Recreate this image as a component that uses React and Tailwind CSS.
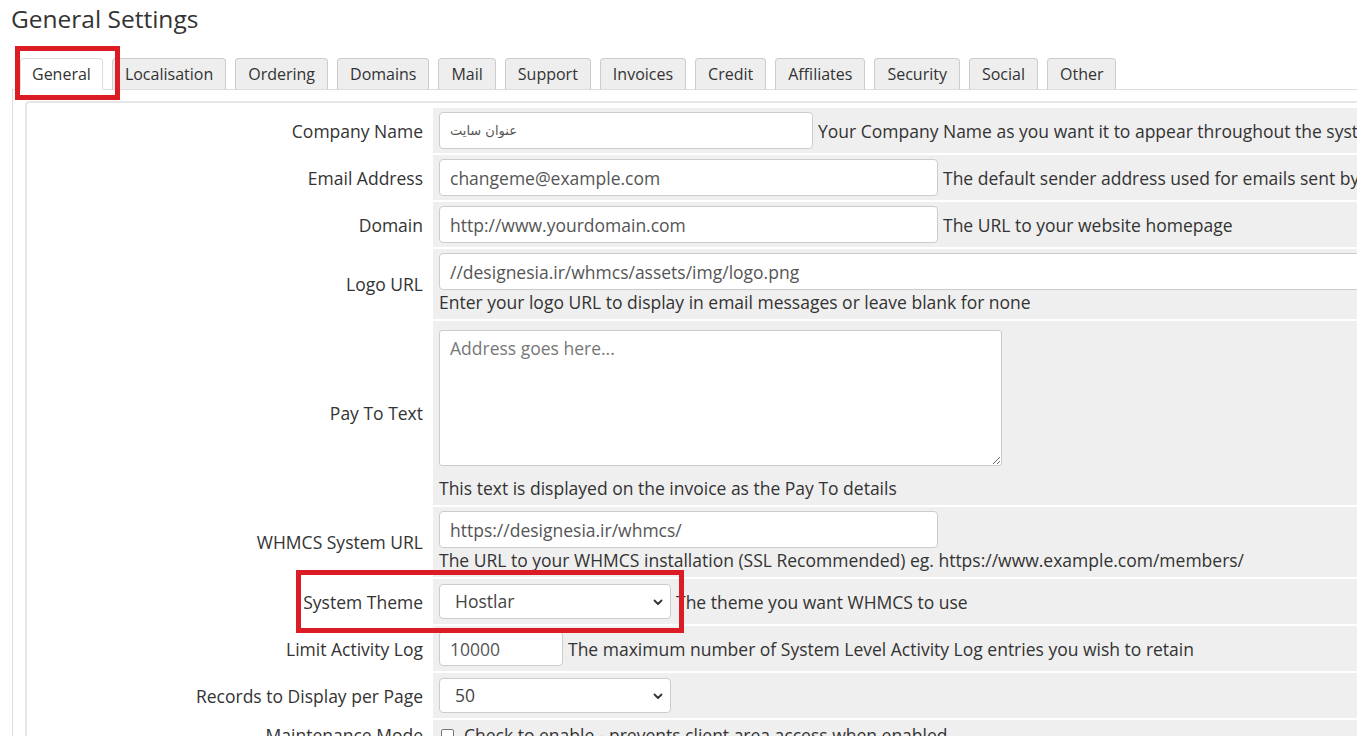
import React from "react";

const tabs = [
  "General",
  "Localisation",
  "Ordering",
  "Domains",
  "Mail",
  "Support",
  "Invoices",
  "Credit",
  "Affiliates",
  "Security",
  "Social",
  "Other",
];

function Row({ label, children, fieldClass = "" }) {
  return (
    <>
      <div className="flex items-center justify-end bg-white pr-[8px] text-[17.5px] leading-[24px] whitespace-nowrap">
        {label}
      </div>
      <div className={`bg-[#efefef] pl-[6px] ${fieldClass}`}>{children}</div>
    </>
  );
}

function TextInput({ value, className = "", textClass = "text-[17.5px]" }) {
  return (
    <input
      readOnly
      defaultValue={value}
      className={`h-[37px] shrink-0 rounded-[4px] border border-[#cccccc] bg-white px-[10px] text-[#555] outline-none ${textClass} ${className}`}
    />
  );
}

function Select({ value }) {
  return (
    <div className="flex h-[35px] w-[232px] shrink-0 items-center justify-between rounded-[4px] border border-[#cccccc] bg-white pl-[15px] pr-[6px] text-[17.5px] text-[#444]">
      <span>{value}</span>
      <svg width="12" height="12" viewBox="0 0 12 12" fill="none">
        <path d="M2.5 4.5 L6 8 L9.5 4.5" stroke="#333" strokeWidth="1.8" strokeLinecap="round" strokeLinejoin="round" />
      </svg>
    </div>
  );
}

function Help({ children, className = "" }) {
  return (
    <span className={`whitespace-nowrap text-[17.5px] leading-[24px] text-[#333] ${className}`}>{children}</span>
  );
}

export default function App() {
  return (
    <div className="relative h-[736px] w-[1357px] overflow-hidden bg-white font-['Open_Sans',sans-serif] text-[#333]">
      <h1 className="pl-[11px] pt-[6px] text-[24.5px] font-normal leading-[26px]">General Settings</h1>

      <div className="ml-[12px] mt-[26px] w-[1600px]">
        {/* tab strip */}
        <div className="flex items-end gap-[9px] border-b border-[#dddddd] pl-[8px]">
          {tabs.map((t, i) => (
            <div
              key={t}
              className={
                i === 0
                  ? "-mb-px flex h-[32px] items-center rounded-t-[4px] border border-[#dddddd] border-b-white bg-white px-[11px] text-[16px]"
                  : "-mb-px flex h-[32px] items-center rounded-t-[4px] border border-[#cccccc] border-b-[#dddddd] bg-[#eeeeee] px-[12px] text-[16px]"
              }
            >
              {t}
            </div>
          ))}
        </div>

        {/* tab panel */}
        <div className="border-l border-[#dddddd] pl-[12px] pt-[11px]">
          <div className="grid grid-cols-[404px_1fr] gap-[2px] rounded-tl-[4px] border-l-2 border-t-2 border-[#e6e6e6] pt-[5px]">
            <Row label="Company Name" fieldClass="flex items-center gap-[5px] py-[4px]">
              <TextInput
                value="عنوان سایت"
                className="w-[374px]"
                textClass="font-['DejaVu_Sans',sans-serif] text-[13px] text-[#333]"
              />
              <Help>Your Company Name as you want it to appear throughout the system.</Help>
            </Row>

            <Row label="Email Address" fieldClass="flex items-center gap-[5px] py-[4px]">
              <TextInput value="changeme@example.com" className="w-[499px]" />
              <Help>The default sender address used for emails sent by WHMCS</Help>
            </Row>

            <Row label="Domain" fieldClass="flex items-center gap-[5px] py-[4px]">
              <TextInput value="http://www.yourdomain.com" className="w-[499px]" />
              <Help>The URL to your website homepage</Help>
            </Row>

            <Row label="Logo URL" fieldClass="flex flex-col pt-[4px] pb-[5px]">
              <TextInput value="//designesia.ir/whmcs/assets/img/logo.png" className="w-full" />
              <Help>Enter your logo URL to display in email messages or leave blank for none</Help>
            </Row>

            <Row label="Pay To Text" fieldClass="flex flex-col items-start pt-[9px] pb-[5px]">
              <textarea
                readOnly
                placeholder="Address goes here..."
                className="h-[136px] w-[563px] rounded-[3px] border border-[#cccccc] bg-white px-[10px] py-[5px] text-[17.5px] leading-[24px] text-[#555] outline-none placeholder:text-[#777]"
              />
              <Help className="mt-[10px]">This text is displayed on the invoice as the Pay To details</Help>
            </Row>

            <Row label="WHMCS System URL" fieldClass="flex flex-col items-start pt-[4px] pb-[5px]">
              <TextInput value="https://designesia.ir/whmcs/" className="w-[499px]" />
              <Help>The URL to your WHMCS installation (SSL Recommended) eg. https://www.example.com/members/</Help>
            </Row>

            <Row label="System Theme" fieldClass="flex items-center gap-[5px] py-[5px]">
              <Select value="Hostlar" />
              <Help>The theme you want WHMCS to use</Help>
            </Row>

            <Row label="Limit Activity Log" fieldClass="flex items-center gap-[5px] py-[5px]">
              <TextInput value="10000" className="h-[35px]! w-[124px]" />
              <Help>The maximum number of System Level Activity Log entries you wish to retain</Help>
            </Row>

            <Row label="Records to Display per Page" fieldClass="flex items-center gap-[5px] py-[5px]">
              <Select value="50" />
            </Row>

            <Row label="Maintenance Mode" fieldClass="flex items-center gap-[10px] py-[3px] pl-[8px]">
              <div className="h-[13px] w-[13px] shrink-0 rounded-[2px] border border-[#767676] bg-white" />
              <Help>Check to enable - prevents client area access when enabled</Help>
            </Row>
          </div>
        </div>
      </div>

      {/* highlight marks drawn over the form */}
      <div className="pointer-events-none absolute left-[15px] top-[46px] h-[54px] w-[105px] border-[5px] border-[#dc1c24]" />
      <div className="pointer-events-none absolute left-[296px] top-[570px] h-[63px] w-[388px] border-[5px] border-[#dc1c24]" />
    </div>
  );
}
